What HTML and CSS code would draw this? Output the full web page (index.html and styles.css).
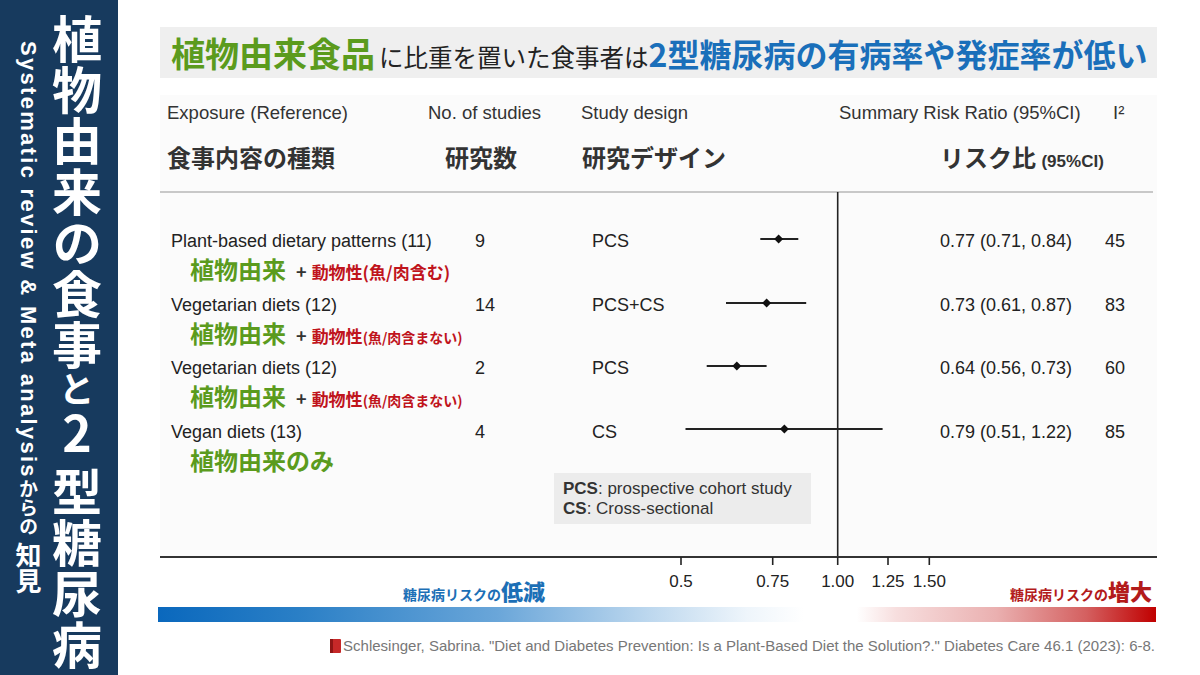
FILE: index.html
```html
<!DOCTYPE html>
<html lang="ja">
<head>
<meta charset="utf-8">
<title>植物由来の食事と2型糖尿病</title>
<link rel="stylesheet" href="styles.css">
</head>
<body>
<aside class="side">
  <div class="side-sub"><span class="sub-latin">Systematic review &amp; Meta analysis</span><span class="sub-kana">からの</span> <span class="sub-kanji">知見</span></div>
  <div class="side-title">植物由来の食事<span class="to">と</span><span class="two">2</span>型糖尿病</div>
</aside>
<main class="main">
  <h1 class="headline"><span class="hl-green">植物由来食品</span><span class="hl-black">に比重を置いた食事者は</span><span class="hl-blue">2型糖尿病の有病率や発症率が低い</span></h1>
  <section class="chart">
    <div class="hdr-en">
      <span>Exposure (Reference)</span><span>No. of studies</span><span>Study design</span><span>Summary Risk Ratio (95%CI)</span><span>I²</span>
    </div>
    <div class="hdr-jp">
      <span>食事内容の種類</span><span>研究数</span><span>研究デザイン</span><span>リスク比 <small>(95%CI)</small></span>
    </div>
    <div class="plot">
      <svg class="forest" width="997" height="400" viewBox="0 0 997 400">
        <g stroke="#222" stroke-width="1.6" fill="none">
          <line x1="677.7" y1="-1" x2="677.7" y2="363"/>
          <line x1="600.3" y1="46" x2="638.3" y2="46" stroke-width="2"/>
          <line x1="566" y1="110" x2="646.2" y2="110" stroke-width="2"/>
          <line x1="546.7" y1="173" x2="606.6" y2="173" stroke-width="2"/>
          <line x1="525.5" y1="236" x2="722.6" y2="236" stroke-width="2"/>
          <line x1="521" y1="364" x2="521" y2="372"/>
          <line x1="612.7" y1="364" x2="612.7" y2="372"/>
          <line x1="677.7" y1="364" x2="677.7" y2="372"/>
          <line x1="728" y1="364" x2="728" y2="372"/>
          <line x1="769.3" y1="364" x2="769.3" y2="372"/>
        </g>
        <g fill="#111">
          <polygon points="618.6,41.5 623.1,46 618.6,50.5 614.1,46"/>
          <polygon points="606.6,105.5 611.1,110 606.6,114.5 602.1,110"/>
          <polygon points="576.8,168.5 581.3,173 576.8,177.5 572.3,173"/>
          <polygon points="624.4,231.5 628.9,236 624.4,240.5 619.9,236"/>
        </g>
        <g class="ticks" fill="#222" text-anchor="middle">
          <text x="521" y="394">0.5</text>
          <text x="612.7" y="394">0.75</text>
          <text x="677.7" y="394">1.00</text>
          <text x="728" y="394">1.25</text>
          <text x="769.3" y="394">1.50</text>
        </g>
      </svg>
      <div class="row">
        <span>Plant-based dietary patterns (11)</span><span>9</span><span>PCS</span><span>0.77 (0.71, 0.84)</span><span>45</span>
        <div class="jp"><span class="g">植物由来</span><span class="plus">+</span><span class="r">動物性(魚/肉含む)</span></div>
      </div>
      <div class="row">
        <span>Vegetarian diets (12)</span><span>14</span><span>PCS+CS</span><span>0.73 (0.61, 0.87)</span><span>83</span>
        <div class="jp"><span class="g">植物由来</span><span class="plus">+</span><span class="r">動物性<small>(魚/肉含まない)</small></span></div>
      </div>
      <div class="row">
        <span>Vegetarian diets (12)</span><span>2</span><span>PCS</span><span>0.64 (0.56, 0.73)</span><span>60</span>
        <div class="jp"><span class="g">植物由来</span><span class="plus">+</span><span class="r">動物性<small>(魚/肉含まない)</small></span></div>
      </div>
      <div class="row last">
        <span>Vegan diets (13)</span><span>4</span><span>CS</span><span>0.79 (0.51, 1.22)</span><span>85</span>
        <div class="jp"><span class="g">植物由来のみ</span></div>
      </div>
      <div class="legend">
        <div><b>PCS</b>: prospective cohort study</div>
        <div><b>CS</b>: Cross-sectional</div>
      </div>
    </div>
  </section>
  <div class="risk">
    <div class="risk-low"><small>糖尿病リスクの</small><b>低減</b></div>
    <div class="risk-high"><small>糖尿病リスクの</small><b>増大</b></div>
  </div>
  <div class="bar"></div>
  <p class="cite"><svg class="book" width="11" height="14" viewBox="0 0 11 14"><rect x="0" y="0" width="11" height="14" rx="1" fill="#c62828"/><rect x="0" y="0" width="3" height="14" fill="#8e1515"/></svg>Schlesinger, Sabrina. "Diet and Diabetes Prevention: Is a Plant-Based Diet the Solution?." Diabetes Care 46.1 (2023): 6-8.</p>
</main>
</body>
</html>
```

FILE: styles.css
```css
* { box-sizing: border-box; margin: 0; padding: 0; }
html, body { width: 1200px; height: 675px; overflow: hidden; }
body {
  display: flex;
  background: #fff;
  font-family: "Liberation Sans", "Noto Sans CJK JP", sans-serif;
  color: #222;
}

/* sidebar */
.side {
  width: 118px;
  flex: none;
  background: #173a5e;
  color: #fff;
  display: flex;
  align-items: flex-start;
  padding-left: 16px;
  gap: 12px;
}
.side-sub {
  writing-mode: vertical-rl;
  font-weight: 700;
  font-size: 22px;
  line-height: 24px;
  margin-top: 41px;
  white-space: nowrap;
}
.sub-latin { letter-spacing: 2.3px; }
.sub-kana { font-family: "Noto Sans CJK JP", sans-serif; font-size: 19px; }
.sub-kanji { font-family: "Noto Sans CJK JP", sans-serif; font-size: 26px; }
.side-title {
  writing-mode: vertical-rl;
  text-orientation: upright;
  font-family: "Noto Sans CJK JP", sans-serif;
  font-weight: 700;
  font-size: 50px;
  line-height: 50px;
  letter-spacing: 1px;
  margin-top: 14px;
  white-space: nowrap;
}
.side-title .to { font-size: 36px; }
.side-title .two { padding-inline-end: 8px; }

/* main */
.main {
  flex: 1;
  padding: 27px 43px 0 42px;
  display: flex;
  flex-direction: column;
}
.headline {
  height: 51px;
  flex: none;
  background: #efefef;
  padding-left: 11px;
  font-family: "Noto Sans CJK JP", sans-serif;
  font-weight: 700;
  font-size: 24px;
  line-height: 51px;
  white-space: nowrap;
}
.hl-green { color: #5b9b1d; font-size: 34px; }
.hl-black { color: #222; font-weight: 400; font-size: 24.5px; margin-left: 4px; }
.hl-blue { color: #1a6fba; font-size: 32px; }

.chart {
  margin-top: 17px;
  width: 997px;
  flex: none;
  background: #fbfbfb;
}
.hdr-en {
  display: grid;
  grid-template-columns: 261px 153px 258px 274px auto;
  height: 30px;
  padding: 6px 0 0 7px;
  font-size: 18.5px;
  line-height: 24px;
  color: #333;
}
.hdr-en span { display: block; height: 24px; }
.hdr-jp {
  display: grid;
  grid-template-columns: 278px 137px 358px auto;
  height: 68px;
  padding: 18px 0 0 7px;
  margin-right: 4px;
  font-family: "Noto Sans CJK JP", sans-serif;
  font-weight: 700;
  font-size: 24px;
  line-height: 28px;
  color: #333;
  border-bottom: 2px solid #c8c8c8;
}
.hdr-jp span { display: block; height: 28px; }
.hdr-jp small { font-family: "Liberation Sans", sans-serif; font-size: 17px; line-height: 1; }

.plot {
  position: relative;
  height: 365px;
  padding-top: 34px;
  border-bottom: 2px solid #333;
}
.forest {
  position: absolute;
  left: 0;
  top: 0;
  overflow: visible;
}
.ticks { font-family: "Liberation Sans", sans-serif; font-size: 17px; }

.row {
  display: grid;
  grid-template-columns: 304px 117px 348px 165px auto;
  grid-template-rows: 28px 27px;
  height: 55px;
  padding-left: 11px;
  margin-bottom: 8.5px;
  font-size: 18px;
  line-height: 28px;
  color: #222;
}
.row.last { margin-bottom: 0; }
.row .jp {
  grid-column: 1 / -1;
  padding-left: 19px;
  height: 27px;
  line-height: 27px;
  font-family: "Noto Sans CJK JP", sans-serif;
  font-weight: 700;
  white-space: nowrap;
}
.jp .g { color: #5b9b1d; font-size: 24px; }
.jp .plus { color: #333; font-size: 18px; margin: 0 5px 0 10px; }
.jp .r { color: #c0141c; font-size: 17px; }
.jp .r small { font-size: 14px; }

.legend {
  margin-left: 394px;
  width: 257px;
  height: 51px;
  padding: 6px 9px;
  background: #ececec;
  font-size: 17px;
  line-height: 20px;
  color: #333;
}

.risk {
  display: flex;
  justify-content: space-between;
  flex: none;
  height: 44px;
  padding-top: 20px;
  line-height: 24px;
  font-family: "Noto Sans CJK JP", sans-serif;
  font-weight: 700;
  white-space: nowrap;
}
.risk small { font-size: 14px; }
.risk b { font-size: 22px; }
.risk-low { width: 385px; text-align: right; color: #1c6fb6; }
.risk-high { color: #b31b1b; margin-right: 5px; }

.bar {
  margin: 5px 0 0 -2px;
  width: 998px;
  height: 15px;
  flex: none;
  background: linear-gradient(to right,
    #0a68bd 0%, #2a7fc6 14%, #6aa6d9 34%, #bcd7ee 49%, #eef5fb 59%, #fff 64.7%,
    #fff 70%, #f7dede 74%, #eab0b0 84%, #d46060 93%, #c00000 100%);
}

.cite {
  margin: 16px 2px 0 0;
  display: flex;
  justify-content: flex-end;
  align-items: center;
  gap: 2px;
  font-size: 15px;
  line-height: 16px;
  color: #777;
  white-space: nowrap;
}
.book { flex: none; }
```
